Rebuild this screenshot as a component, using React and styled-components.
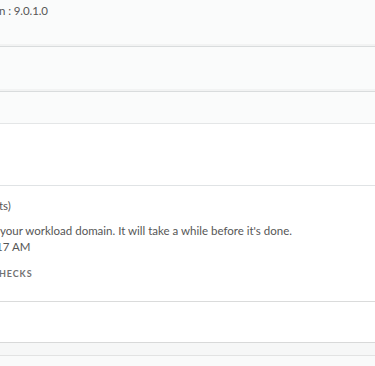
import React from "react";
import styled, { createGlobalStyle } from "styled-components";

const Global = createGlobalStyle`
  html, body { margin: 0; padding: 0; background: #ffffff; }
  body { font-family: Lato, "Open Sans", sans-serif; color: #565656; }
`;

const Page = styled.div`
  width: 375px;
  height: 366px;
  overflow: hidden;
  display: flex;
  flex-direction: column;
  background: #f9fafa;
`;

const SummaryPanel = styled.section`
  display: flex;
  flex-direction: column;
  background: #fafbfb;
  border-bottom: 1px solid #e4e6e7;
`;

const SummaryRow = styled.div`
  height: ${(p) => p.$h}px;
  box-sizing: border-box;
  padding-top: 3px;
  border-bottom: ${(p) => (p.$divider ? "1px solid #d9dcdd" : "none")};
  box-shadow: ${(p) => (p.$divider ? "inset 0 -2px 0 #f2f3f3" : "none")};
`;

const MetaText = styled.div`
  margin-left: ${(p) => p.$shift || 0}px;
  font-size: 11.5px;
  line-height: 16px;
  letter-spacing: -0.1px;
  white-space: nowrap;
`;

const Card = styled.section`
  display: flex;
  flex-direction: column;
  background: #ffffff;
  border-bottom: 1px solid #d8d9d9;
  box-shadow: 0 2px 2px rgba(0, 0, 0, 0.04);
`;

const CardBlock = styled.div`
  height: ${(p) => p.$h}px;
  box-sizing: border-box;
  border-bottom: ${(p) => (p.$divider ? `1px solid ${p.$divider}` : "none")};
`;

const CardBody = styled.div`
  height: 116px;
  box-sizing: border-box;
  padding-top: 12px;
  border-bottom: 1px solid #dadbdb;
  display: flex;
  flex-direction: column;
`;

const BodyLine = styled.div`
  margin-left: ${(p) => p.$shift || 0}px;
  margin-top: ${(p) => p.$gap || 0}px;
  font-size: 11.5px;
  line-height: 16px;
  white-space: nowrap;
  color: #565656;
`;

const SectionLabel = styled.div`
  margin-left: ${(p) => p.$shift || 0}px;
  margin-top: 13px;
  font-size: 9px;
  line-height: 12px;
  font-weight: 700;
  letter-spacing: 0.9px;
  color: #727272;
  white-space: nowrap;
`;

const Band = styled.div`
  height: 12px;
  background: #f6f7f7;
  border-bottom: 1px solid #e2e3e3;
`;

const Rest = styled.div`
  flex: 1;
  background: #f9fafa;
`;

export default function App() {
  return (
    <>
      <Global />
      <Page>
        <SummaryPanel>
          <SummaryRow $h={47} $divider>
            <MetaText $shift={-1}>n : 9.0.1.0</MetaText>
          </SummaryRow>
          <SummaryRow $h={45} $divider />
          <SummaryRow $h={31} />
        </SummaryPanel>
        <Card>
          <CardBlock $h={62} $divider="#e0e3e5" />
          <CardBody>
            <BodyLine $shift={-1}>ts)</BodyLine>
            <BodyLine $gap={9}>your workload domain. It will take a while before it's done.</BodyLine>
            <BodyLine $shift={-4}>17 AM</BodyLine>
            <SectionLabel $shift={-1}>HECKS</SectionLabel>
          </CardBody>
          <CardBlock $h={40} />
        </Card>
        <Band />
        <Rest />
      </Page>
    </>
  );
}
